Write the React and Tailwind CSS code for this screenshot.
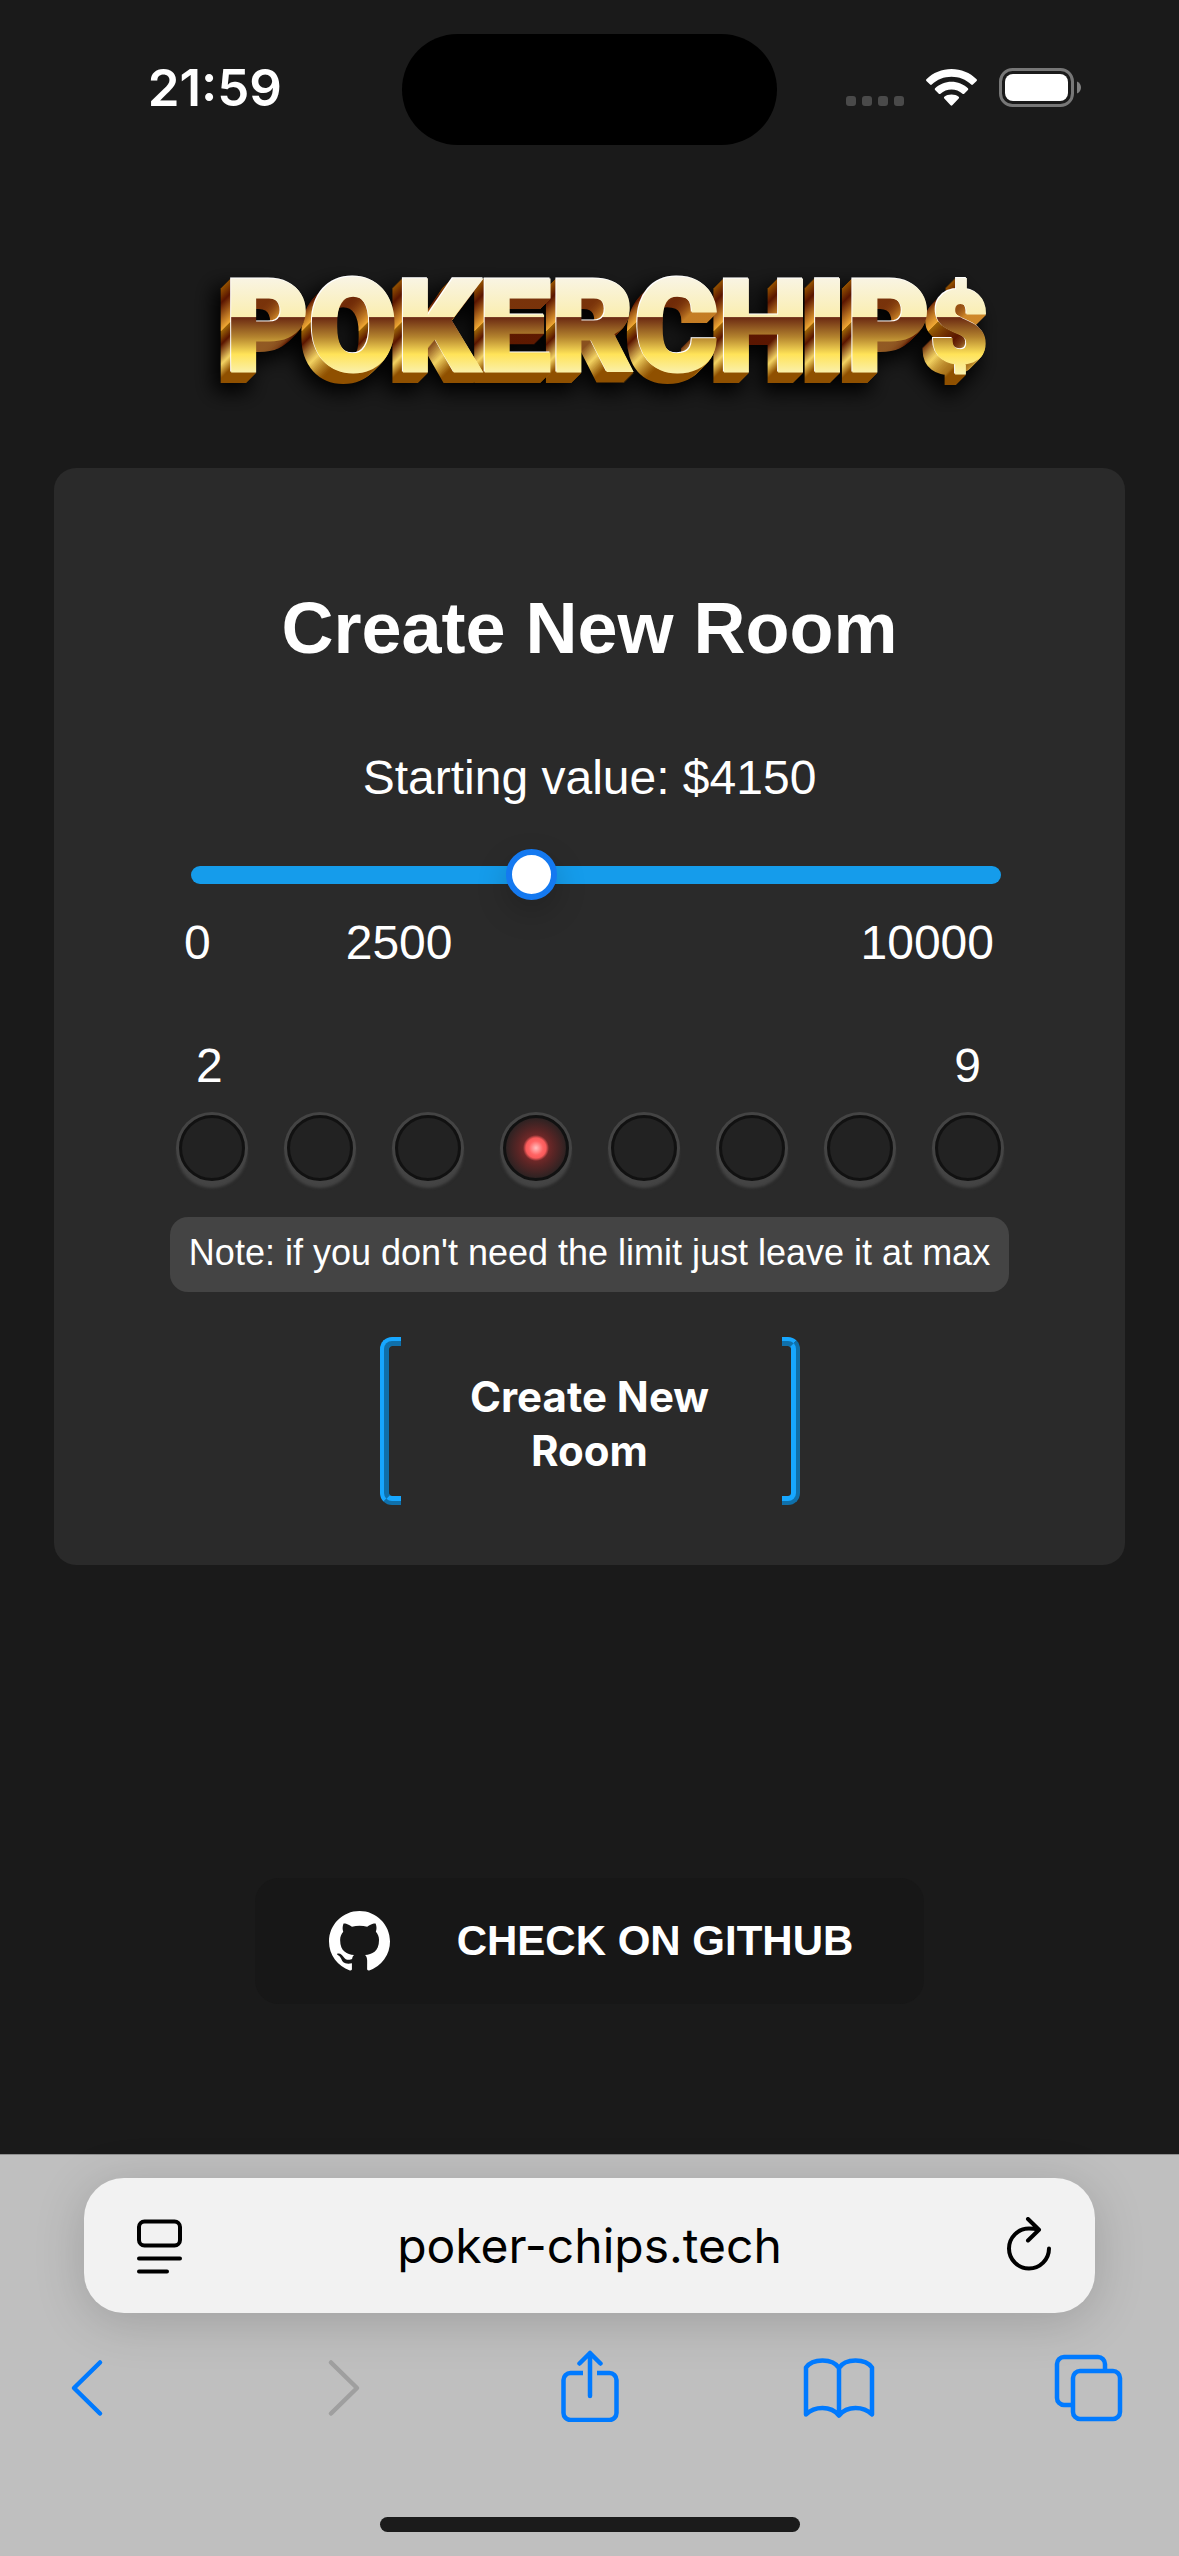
import { useState } from "react";

const OFFSETS = [10, 9, 8, 7, 6, 5, 4, 3, 2, 1];
const SEATS = [2, 3, 4, 5, 6, 7, 8, 9];

function StatusBar() {
  return (
    <header className="grid grid-cols-[1fr_375px_1fr] pt-[34px] font-['Inter',sans-serif]">
      <div className="flex h-[111px] items-center justify-end pr-[120px] pb-1">
        <time className="text-[51px] leading-none font-semibold text-white">21:59</time>
      </div>
      <div className="h-[111px] rounded-full bg-black" />
      <div className="flex h-[111px] items-center gap-[22px] pb-1 pl-[69px]">
        <div className="flex gap-[6px] pt-[26px]">
          <span className="size-[10px] rounded-[3px] bg-[#4a4a4a]" />
          <span className="size-[10px] rounded-[3px] bg-[#4a4a4a]" />
          <span className="size-[10px] rounded-[3px] bg-[#4a4a4a]" />
          <span className="size-[10px] rounded-[3px] bg-[#4a4a4a]" />
        </div>
        <svg className="h-[37px] w-[51px]" viewBox="0 0 51 37" fill="#fff" aria-label="Wi-Fi">
          <path d="M25.5 0C35 0 44 3.7 50.6 10.2c.5.5.5 1.2 0 1.700l-3.700 3.700c-.5.5-1.200.5-1.700 0C39.900 10.500 32.900 7.800 25.500 7.800S11.100 10.500 5.800 15.600c-.5.5-1.200.5-1.700 0L.4 11.900c-.5-.5-.5-1.200 0-1.700C7 3.700 16 0 25.500 0z" />
          <path d="M25.500 12.800c6.200 0 12 2.400 16.400 6.500.5.5.5 1.200 0 1.700l-3.700 3.700c-.5.5-1.200.5-1.700 0-3-2.700-6.900-4.200-11-4.200s-8 1.500-11 4.200c-.5.5-1.200.5-1.700 0l-3.700-3.700c-.5-.5-.5-1.200 0-1.700 4.400-4.100 10.200-6.500 16.400-6.500z" />
          <path d="M25.500 25.500c2.900 0 5.300.8 7.200 2.300.5.4.5 1.200 0 1.700l-6.400 6.800c-.5.500-1.200.500-1.700 0l-6.300-6.800c-.5-.5-.5-1.300 0-1.700 1.900-1.500 4.300-2.300 7.200-2.300z" />
        </svg>
        <svg className="h-[39px] w-[82px]" viewBox="0 0 82 39" aria-label="Battery">
          <rect x="1.500" y="1.500" width="72" height="36" rx="12" fill="none" stroke="#777" strokeWidth="3" />
          <rect x="6" y="6" width="63" height="27" rx="8" fill="#fff" />
          <path d="M78 13.500c2.700 1.200 4 3.400 4 6s-1.300 4.800-4 6z" fill="#808080" />
        </svg>
      </div>
    </header>
  );
}

function Logo() {
  return (
    <svg className="mx-auto mt-[95px] h-[170px] w-[820px] overflow-visible" viewBox="0 0 820 170">
      <defs>
        <linearGradient id="face" gradientUnits="userSpaceOnUse" x1="0" y1="33" x2="0" y2="132">
          <stop offset="0" stopColor="#f9f5ea" />
          <stop offset="0.440" stopColor="#faeeb0" />
          <stop offset="0.445" stopColor="#fff6cf" />
          <stop offset="0.450" stopColor="#6b2a12" />
          <stop offset="0.650" stopColor="#b5852f" />
          <stop offset="0.820" stopColor="#ffe358" />
          <stop offset="1" stopColor="#faf0a8" />
        </linearGradient>
        <linearGradient id="edge" gradientUnits="userSpaceOnUse" x1="0" y1="33" x2="0" y2="132">
          <stop offset="0" stopColor="#8f4d00" />
          <stop offset="0.060" stopColor="#8f4d00" />
          <stop offset="0.200" stopColor="#5a1500" />
          <stop offset="0.480" stopColor="#efa733" />
          <stop offset="0.490" stopColor="#9a6206" />
          <stop offset="0.620" stopColor="#5a1500" />
          <stop offset="0.820" stopColor="#f3d362" />
          <stop offset="0.960" stopColor="#8f5000" />
          <stop offset="1" stopColor="#8f5000" />
        </linearGradient>
        <filter id="soft" x="-10%" y="-40%" width="120%" height="180%">
          <feGaussianBlur stdDeviation="10" />
        </filter>
      </defs>
      <g filter="url(#soft)" fill="#000" stroke="#000" strokeWidth="14">
        <use href="#wordmark" x="-12" y="14" />
      </g>
      <g fill="url(#edge)" stroke="url(#edge)" strokeWidth="4">
        {OFFSETS.map((n) => (
          <use key={n} href="#wordmark" x={-n} y={n} />
        ))}
      </g>
      <g fill="#fff" stroke="#fff" strokeWidth="3">
        <use href="#wordmark" x="-1" y="-1" />
      </g>
      <g fill="url(#face)" stroke="url(#face)" strokeWidth="3">
        <text
          id="wordmark"
          x="427"
          y="131"
          textAnchor="middle"
          strokeLinejoin="miter"
          className="font-['Roboto',sans-serif] text-[128px] font-black"
        >
          POKERCHIP
          <tspan dy="-9" className="text-[100px]">
            $
          </tspan>
        </text>
      </g>
    </svg>
  );
}

function RoomForm() {
  const [value, setValue] = useState(4150);
  const [seats, setSeats] = useState(5);
  return (
    <form
      onSubmit={(e) => e.preventDefault()}
      className="mx-[54px] mt-[58px] flex flex-col rounded-[22px] bg-[#2a2a2a] px-[116px] pt-[120px] pb-[60px]"
    >
      <h1 className="text-center text-[72px] leading-[80px] font-bold">Create New Room</h1>
      <label htmlFor="start" className="mt-[82px] text-center text-[48px] leading-[56px]">
        Starting value: ${value}
      </label>
      <div className="mt-[43px] flex pr-[8px] pl-[21px]">
        <input
          id="start"
          type="range"
          min="0"
          max="10000"
          step="50"
          value={value}
          onChange={(e) => setValue(Number(e.target.value))}
          className="h-[51px] w-full cursor-pointer appearance-none bg-transparent [&::-webkit-slider-runnable-track]:h-[18px] [&::-webkit-slider-runnable-track]:rounded-[9px] [&::-webkit-slider-runnable-track]:bg-[#159ceb] [&::-webkit-slider-thumb]:-mt-[17px] [&::-webkit-slider-thumb]:size-[51px] [&::-webkit-slider-thumb]:appearance-none [&::-webkit-slider-thumb]:rounded-full [&::-webkit-slider-thumb]:border-[6px] [&::-webkit-slider-thumb]:border-solid [&::-webkit-slider-thumb]:border-[#1479f0] [&::-webkit-slider-thumb]:bg-white [&::-webkit-slider-thumb]:shadow-[0_12px_32px_rgba(0,0,0,0.2)]"
        />
      </div>
      <div className="mt-[15px] flex pr-[15px] pl-[14px] text-[48px] leading-[56px]">
        <span>0</span>
        <span className="ml-[135px]">2500</span>
        <span className="ml-auto">10000</span>
      </div>
      <fieldset aria-label="Player limit">
        <div className="mt-[67px] flex justify-between pr-[28px] pl-[26px] text-[48px] leading-[56px]">
          <span>2</span>
          <span>9</span>
        </div>
        <div className="mt-[21px] flex justify-between pr-[8px] pl-[9px]">
          {SEATS.map((n) => (
            <input
              key={n}
              type="radio"
              name="seats"
              aria-label={`${n} players`}
              checked={seats === n}
              onChange={() => setSeats(n)}
              className="size-[66px] cursor-pointer appearance-none rounded-full border-[3px] border-[#111] bg-[#222] shadow-[0_0_0_3px_#444,0_5px_3px_2px_#444] checked:bg-[radial-gradient(circle_at_center,#ffc0c0_0px,#ff6464_7px,#f85a5a_10px,#6e2828_13px,#5a2525_18px,#2a2222_31px)]"
            />
          ))}
        </div>
      </fieldset>
      <p className="mt-[36px] rounded-[18px] bg-[#444] pt-[13px] pb-[17px] text-center text-[36px] leading-[45px] whitespace-nowrap">
        Note: if you don't need the limit just leave it at max
      </p>
      <button
        type="submit"
        className="mt-[45px] flex h-[168px] w-[420px] cursor-pointer self-center font-['Inter',sans-serif] text-[42px] leading-[54px] font-bold"
      >
        <span className="w-[21px] self-stretch rounded-l-[12px] border-[9px] border-r-0 border-[#17a7ff] [border-style:ridge]" />
        <span className="flex-1 self-center pt-[6px] pr-[61px] pl-[58px]">Create New Room</span>
        <span className="w-[18px] self-stretch rounded-r-[12px] border-[9px] border-l-0 border-[#17a7ff] [border-style:ridge]" />
      </button>
    </form>
  );
}

function GithubLink() {
  return (
    <a
      href="https://github.com"
      className="mx-auto mt-[313px] flex h-[126px] items-center gap-[67px] rounded-[24px] bg-[#171717] pr-[71px] pl-[74px] text-[42px] leading-[48px] font-bold"
    >
      <svg className="size-[61px]" viewBox="0 0 16 16" fill="#fff" aria-hidden="true">
        <path d="M8 0C3.580 0 0 3.580 0 8c0 3.540 2.290 6.530 5.470 7.590.4.070.55-.17.55-.38 0-.19-.01-.82-.01-1.490-2.010.37-2.530-.49-2.690-.94-.09-.23-.48-.94-.82-1.130-.28-.15-.68-.52-.01-.53.63-.01 1.080.58 1.230.82.72 1.210 1.870.87 2.330.66.07-.52.28-.87.51-1.070-1.780-.2-3.640-.89-3.640-3.950 0-.87.31-1.590.82-2.150-.08-.2-.36-1.020.08-2.120 0 0 .67-.21 2.200.82.64-.18 1.320-.27 2-.27s1.360.09 2 .27c1.530-1.040 2.200-.82 2.200-.82.44 1.100.16 1.920.08 2.120.51.56.82 1.270.82 2.150 0 3.070-1.870 3.750-3.650 3.950.29.25.54.73.54 1.480 0 1.070-.01 1.930-.01 2.200 0 .21.15.46.55.38A8.010 8.010 0 0 0 16 8c0-4.420-3.580-8-8-8z" />
      </svg>
      CHECK ON GITHUB
    </a>
  );
}

function ToolButton({ label, children, disabled }) {
  return (
    <button
      type="button"
      aria-label={label}
      disabled={disabled}
      className="size-[72px] text-[#007aff] disabled:text-[#9f9f9f]"
    >
      <svg
        className="size-full"
        viewBox="0 0 72 72"
        fill="none"
        stroke="currentColor"
        strokeWidth="4.5"
        strokeLinecap="round"
        strokeLinejoin="round"
      >
        {children}
      </svg>
    </button>
  );
}

function BrowserBar() {
  return (
    <footer className="mt-auto flex flex-col border-t border-[#8f8f8f] bg-[#bfbfbf] pt-[23px] pb-[24px] font-['Inter',sans-serif] text-black">
      <div className="mx-[84px] flex h-[135px] items-center justify-between rounded-[40px] bg-[#f2f2f2] pr-[40px] pl-[50px] shadow-[0_8px_50px_rgba(0,0,0,0.17)]">
        <button type="button" aria-label="Page settings">
          <svg className="h-[58px] w-[50px]" viewBox="0 0 50 58" fill="none" stroke="#000" strokeWidth="4" strokeLinecap="round">
            <rect x="5" y="4.500" width="41" height="24" rx="5.500" />
            <path d="M5 41.500h41M5 54.500h28" />
          </svg>
        </button>
        <input
          aria-label="Address"
          defaultValue="poker-chips.tech"
          className="w-0 flex-1 bg-transparent text-center text-[48px] leading-[60px] outline-none"
        />
        <button type="button" aria-label="Reload">
          <svg className="h-[58px] w-[60px]" viewBox="-10 0 60 58" fill="none" stroke="#000" strokeWidth="4" strokeLinecap="round" strokeLinejoin="round">
            <path d="M44 31.500A20 20 0 1 1 24 11.500q5 0 9.500 1M23 2l11 10.800L23 23.500" />
          </svg>
        </button>
      </div>
      <nav className="mt-[37px] flex justify-between px-[54px]">
        <ToolButton label="Back">
          <path d="M46 12.500 20 38l26 25.500" />
        </ToolButton>
        <ToolButton label="Forward" disabled>
          <path d="M27 12.500 53 38 27 63.500" />
        </ToolButton>
        <ToolButton label="Share">
          <path d="M36 46V3M25.500 13.500 36 3l10.500 10.500" />
          <path d="M29 23H16.500a7 7 0 0 0-7 7v33a7 7 0 0 0 7 7h39a7 7 0 0 0 7-7V30a7 7 0 0 0-7-7H43" strokeLinecap="butt" />
        </ToolButton>
        <ToolButton label="Bookmarks">
          <path d="M36 18C32.500 12.500 26.500 10.500 19.500 10.500S6.500 12.500 3 17.500V64.500c4-4 9.500-6.500 16.500-6.500S32 60.500 36 65.500c4-5 9.500-7.500 16.500-7.500S65 60.500 69 64.500V17.500C65.500 12.500 59.500 10.500 52.500 10.500S39.500 12.500 36 18zM36 18v47" />
        </ToolButton>
        <ToolButton label="Tabs">
          <rect x="20" y="21" width="47" height="48" rx="7" />
          <path d="M52 19v-5a7 7 0 0 0-7-7H11a7 7 0 0 0-7 7v34a7 7 0 0 0 7 7h7" strokeLinecap="butt" />
        </ToolButton>
      </nav>
      <div className="mx-auto mt-[95px] h-[15px] w-[420px] rounded-full bg-[#1b1b1b]" />
    </footer>
  );
}

export default function App() {
  return (
    <div className="flex min-h-screen flex-col bg-[#1a1a1a] font-['Liberation_Sans',Arial,sans-serif] text-white">
      <StatusBar />
      <Logo />
      <RoomForm />
      <GithubLink />
      <BrowserBar />
    </div>
  );
}
